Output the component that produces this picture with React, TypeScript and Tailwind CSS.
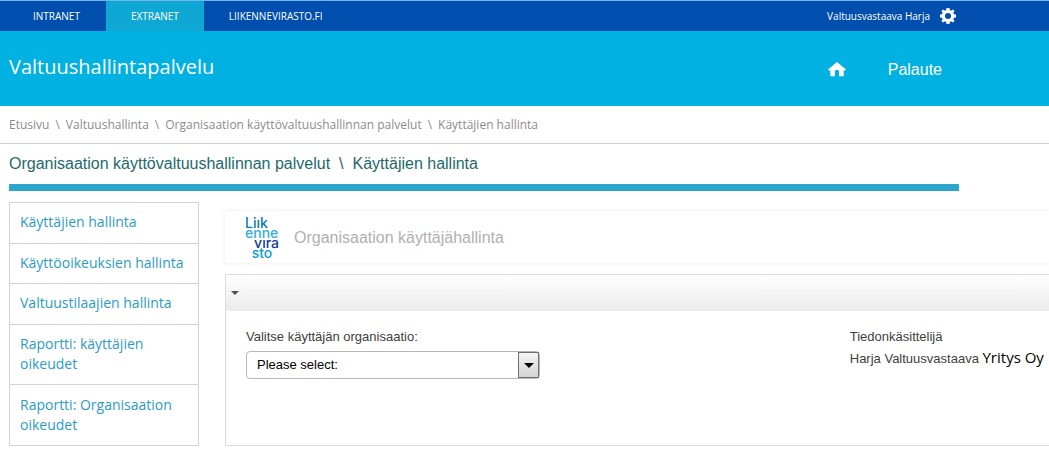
import { Fragment } from "react";

const tabs = [
  { label: "INTRANET", className: "pl-[33px] pr-[26px]" },
  { label: "EXTRANET", className: "bg-[#0fa8d4] px-[25px]" },
  { label: "LIIKENNEVIRASTO.FI", className: "px-[25px]" },
];

const crumbs = [
  "Etusivu",
  "Valtuushallinta",
  "Organisaation käyttövaltuushallinnan palvelut",
  "Käyttäjien hallinta",
];

const menu = [
  "Käyttäjien hallinta",
  "Käyttöoikeuksien hallinta",
  "Valtuustilaajien hallinta",
  "Raportti: käyttäjien oikeudet",
  "Raportti: Organisaation oikeudet",
];

function GearIcon() {
  return (
    <svg viewBox="0 0 20 20" className="size-4" fill="currentColor" aria-hidden="true">
      <path
        fillRule="evenodd"
        d="M8.2 0h3.6l.5 2.6 1.6.7L16.1 1.8 18.2 3.9 16.7 6.1l.7 1.6L20 8.2v3.6l-2.6.5-.7 1.6 1.5 2.2-2.1 2.1-2.2-1.5-1.6.7L11.8 20H8.2l-.5-2.6-1.6-.7-2.2 1.5-2.1-2.1 1.5-2.2-.7-1.6L0 11.8V8.2l2.6-.5.7-1.6L1.8 3.9l2.1-2.1 2.2 1.5 1.6-.7zM10 6.2a3.8 3.8 0 1 0 0 7.6 3.8 3.8 0 0 0 0-7.6z"
      />
    </svg>
  );
}

function HomeIcon() {
  return (
    <svg viewBox="0 0 18 15" className="h-[15px] w-[18px]" fill="currentColor" aria-hidden="true">
      <path d="M9 0 0 7.6l1 1.1 1.3-.6V14.2h4.6V9.6c0-1 .8-1.8 2.1-1.8s2.1.8 2.1 1.8v4.6h4.6V8.1l1.3.6 1-1.1z" />
    </svg>
  );
}

function Logo() {
  return (
    <div className="flex w-[34px] flex-col font-['Inter',sans-serif] text-[14px] leading-[10px] font-medium">
      <span className="text-[#0878bd]">Liık</span>
      <span className="text-[#2fb0dc]">enne</span>
      <span className="self-end text-[#123a9c]">vıra</span>
      <span className="self-center text-[#0a9bd0]">sto</span>
    </div>
  );
}

export default function App() {
  return (
    <div className="min-h-screen overflow-x-hidden bg-white font-['Liberation_Sans',Arial,sans-serif]">
      <div className="border-t border-[#74b4ec] bg-[#004fae] font-['Open_Sans',sans-serif] text-[10px] text-white">
        <div className="flex h-[30px] max-w-[956px] items-stretch justify-between">
          <nav className="flex">
            {tabs.map((tab) => (
              <a key={tab.label} href="#" className={`flex items-center ${tab.className}`}>
                {tab.label}
              </a>
            ))}
          </nav>
          <div className="flex items-center gap-[10px]">
            <span>Valtuusvastaava Harja</span>
            <button type="button" aria-label="Asetukset">
              <GearIcon />
            </button>
          </div>
        </div>
      </div>

      <header className="bg-[#00b1e1] text-white">
        <div className="flex h-[75px] max-w-[942px] items-center justify-between pl-[9px]">
          <h1 className="pb-1 font-['Open_Sans',sans-serif] text-[20px]">Valtuushallintapalvelu</h1>
          <nav className="flex items-center gap-[42px] pt-[2px] text-[16px]">
            <a href="#" aria-label="Etusivu">
              <HomeIcon />
            </a>
            <a href="#">Palaute</a>
          </nav>
        </div>
      </header>

      <nav className="flex h-[38px] items-center gap-[6px] border-b border-[#cfcfcf] px-[9px] font-['Open_Sans',sans-serif] text-[12px] text-[#8c8c8c]">
        {crumbs.map((crumb, i) => (
          <Fragment key={crumb}>
            {i > 0 && <span>\</span>}
            <a href="#">{crumb}</a>
          </Fragment>
        ))}
      </nav>

      <div className="px-[9px]">
        <h2 className="flex h-10 max-w-[950px] items-center gap-[9px] text-[16px] text-[#1d6a6c]">
          <span>Organisaation käyttövaltuushallinnan palvelut</span>
          <span>\</span>
          <span>Käyttäjien hallinta</span>
        </h2>
        <div className="h-[7px] max-w-[950px] bg-[#2da6cc]" />
      </div>

      <div className="flex gap-[26px] pt-[11px] pl-[9px]">
        <nav className="flex w-[190px] shrink-0 flex-col border-x border-t border-[#d4d4d4] font-['Open_Sans',sans-serif] text-[14px] leading-5 text-[#2a9cc6]">
          {menu.map((item) => (
            <a
              key={item}
              href="#"
              className="flex flex-auto items-center border-b border-[#d4d4d4] px-[10px] pt-[9px] pb-[10px]"
            >
              {item}
            </a>
          ))}
        </nav>

        <main className="flex min-w-0 flex-1 flex-col gap-[11px] pt-[9px]">
          <div className="flex h-[52px] items-center gap-[15px] pt-[2px] pl-5 text-[16px] text-[#b0b0b0] shadow-[0_0_4px_rgba(0,0,0,0.08)]">
            <Logo />
            <h3>Organisaation käyttäjähallinta</h3>
          </div>

          <section className="border-y border-l border-[#dcdcdc] text-[13px] text-[#404040]">
            <button
              type="button"
              aria-label="Näytä tai piilota"
              className="flex h-[36px] w-full items-center bg-linear-to-b from-white to-[#ebebeb] pl-[5px] text-[#505050]"
            >
              <svg viewBox="0 0 8 4" className="h-1 w-2" fill="currentColor" aria-hidden="true">
                <path d="M0 0h8L4 4z" />
              </svg>
            </button>
            <div className="grid min-h-[134px] grid-cols-[3fr_1fr] gap-[6px] pt-[15px] pl-5">
              <div>
                <label htmlFor="organisation" className="block leading-[22px]">
                  Valitse käyttäjän organisaatio:
                </label>
                <div className="relative mt-[3px] w-[294px] max-w-full">
                  <select
                    id="organisation"
                    className="h-7 w-full appearance-none rounded-[4px] border border-[#b8b8b8] bg-white pr-6 pl-[10px] text-[13px] text-black"
                  >
                    <option>Please select:</option>
                  </select>
                  <span className="pointer-events-none absolute inset-y-px right-px flex w-[21px] items-center justify-center border border-[#707070] bg-linear-to-b from-[#f4f4f4] to-[#d4d4d4] text-black">
                    <svg viewBox="0 0 10 5" className="h-[5px] w-[10px]" fill="currentColor" aria-hidden="true">
                      <path d="M0 0h10L5 5z" />
                    </svg>
                  </span>
                </div>
              </div>
              <div className="leading-[22px] whitespace-nowrap">
                <p>Tiedonkäsittelijä</p>
                <p>
                  Harja Valtuusvastaava{" "}
                  <span className="font-['Open_Sans',sans-serif] text-[15px] leading-none text-black">Yritys Oy</span>
                </p>
              </div>
            </div>
          </section>
        </main>
      </div>
    </div>
  );
}
